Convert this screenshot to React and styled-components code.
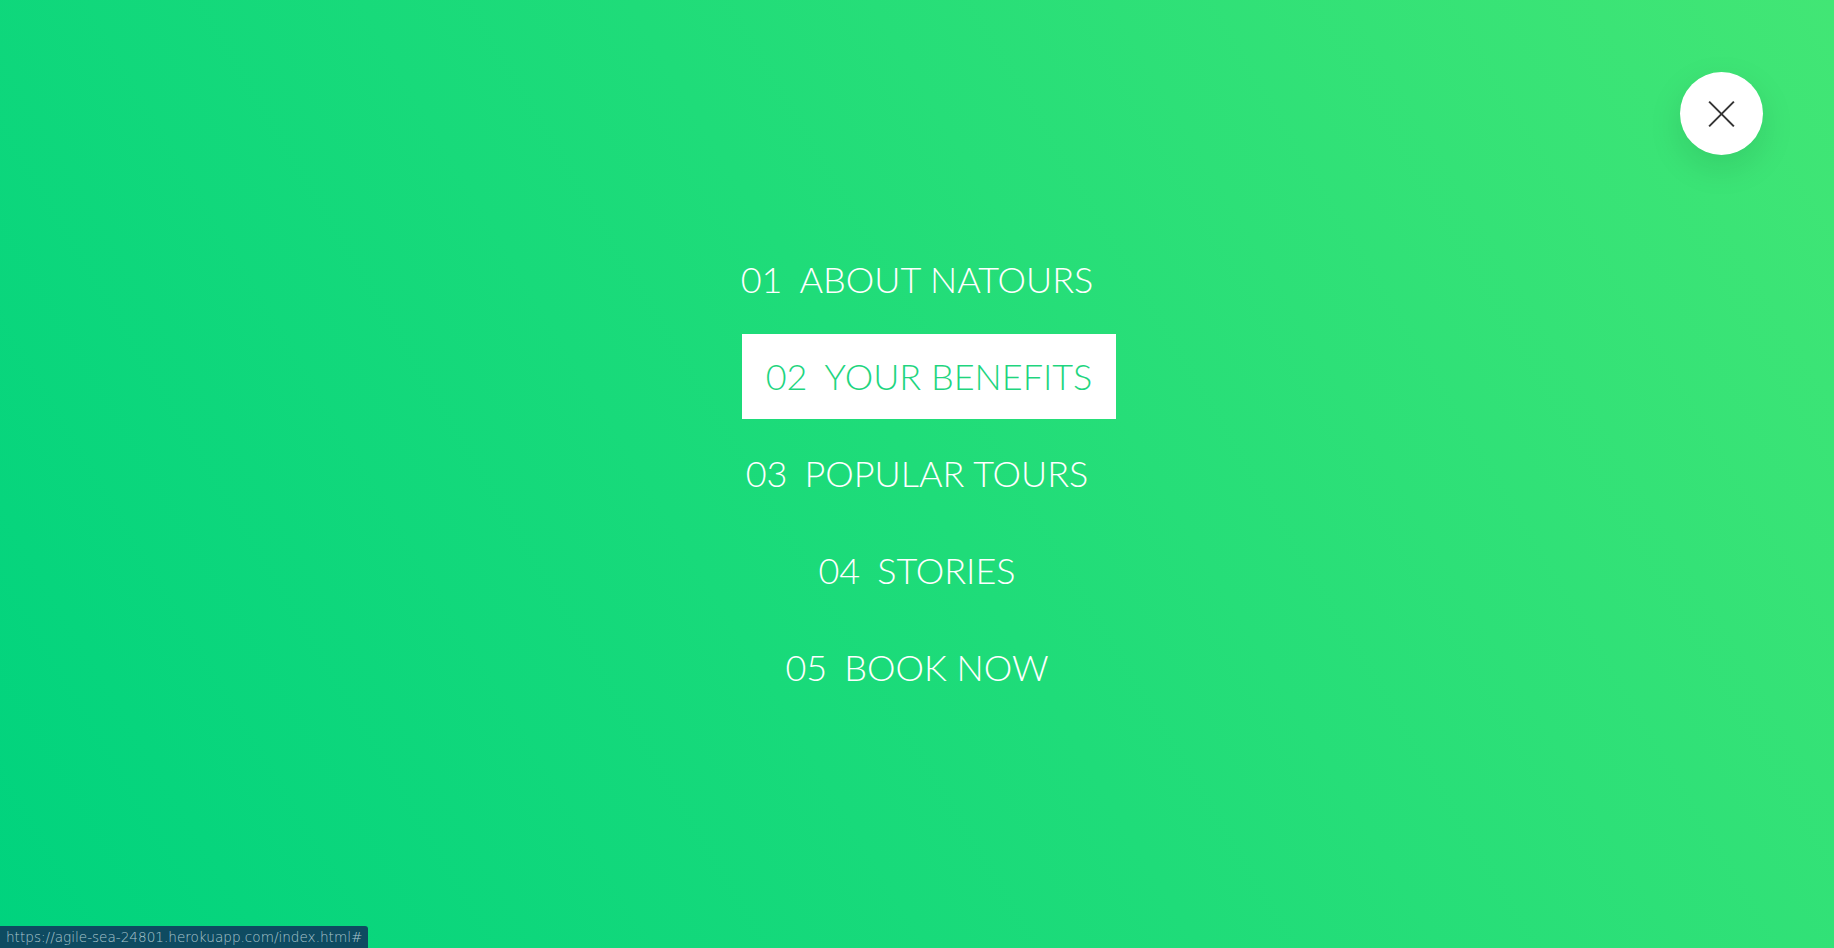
import React from "react";
import styled, { createGlobalStyle } from "styled-components";

const GlobalStyle = createGlobalStyle`
    *, *::before, *::after {
        margin: 0;
        padding: 0;
        box-sizing: border-box;
    }

    html, body {
        height: 100%;
        overflow: hidden;
    }

    body {
        font-family: 'Lato Light', 'Lato', 'Open Sans', sans-serif;
        font-weight: 300;
    }
`

const links = [
    { num: "01", label: "About Natours" },
    { num: "02", label: "Your benefits", active: true },
    { num: "03", label: "Popular tours" },
    { num: "04", label: "Stories" },
    { num: "05", label: "Book now" },
];

export default function App() {
    return (
        <>
            <GlobalStyle />
            <Navigation>
                <CloseButton aria-label="Close menu">
                    <Bar $angle={45} />
                    <Bar $angle={-45} />
                </CloseButton>

                <NavList>
                    {links.map((link) => (
                        <NavItem key={link.num}>
                            <NavLink href="#" $active={link.active}>
                                <Num>{link.num}</Num>
                                {link.label}
                            </NavLink>
                        </NavItem>
                    ))}
                </NavList>
            </Navigation>

            <StatusBar>https://agile-sea-24801.herokuapp.com/index.html#</StatusBar>
        </>
    )
}

const Navigation = styled.nav`
    width: 100vw;
    height: 100vh;
    display: flex;
    justify-content: center;
    align-items: center;
    background-image: linear-gradient(59deg, #00d37e 0%, #1fdc79 50%, #42e675 100%);
`

const NavList = styled.ul`
    list-style: none;
    text-align: center;
    display: flex;
    flex-direction: column;
    align-items: center;
    gap: 12px;
    margin-top: -2px;
`

const NavItem = styled.li`
    display: block;
`

const NavLink = styled.a`
    display: inline-block;
    padding: 12px 24px;
    font-size: 36px;
    line-height: 61px;
    font-weight: 300;
    color: ${(p) => (p.$active ? "#1fd57f" : "#ffffff")};
    background: ${(p) => (p.$active ? "#ffffff" : "transparent")};
    text-decoration: none;
    text-transform: uppercase;
    transform: ${(p) => (p.$active ? "translateX(12px)" : "none")};
`

const Num = styled.span`
    display: inline-block;
    margin-right: 17px;
`

const CloseButton = styled.button`
    position: fixed;
    top: 72px;
    right: 71px;
    width: 83px;
    height: 83px;
    border: none;
    border-radius: 50%;
    background-color: #ffffff;
    box-shadow: 0 12px 35px rgba(0, 0, 0, 0.1);
    cursor: pointer;
    display: flex;
    justify-content: center;
    align-items: center;
`

const Bar = styled.span`
    position: absolute;
    width: 35px;
    height: 2px;
    background-color: #333333;
    transform: rotate(${(p) => p.$angle}deg);
`

const StatusBar = styled.div`
    position: fixed;
    left: 0;
    bottom: 0;
    height: 22px;
    padding: 0 6px 0 6px;
    background-color: #0e4b61;
    color: #aac6ce;
    font-family: 'DejaVu Sans', sans-serif;
    font-size: 13.6px;
    line-height: 22px;
    border-top-right-radius: 3px;
    white-space: nowrap;
`
